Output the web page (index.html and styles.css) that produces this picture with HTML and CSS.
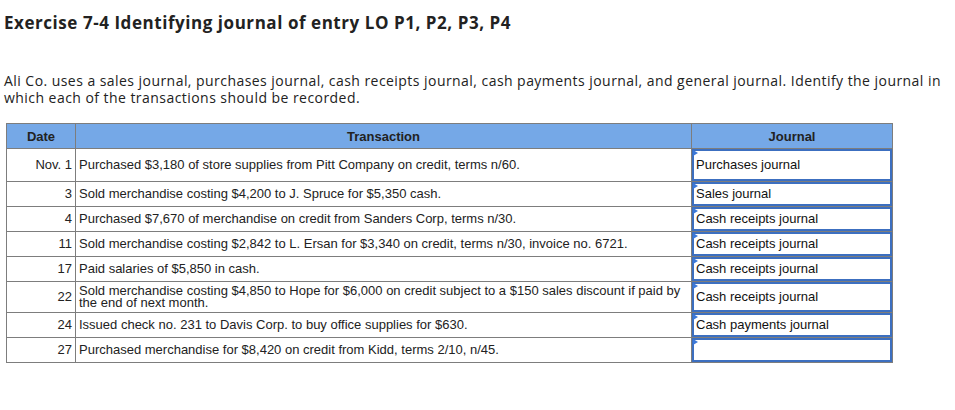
FILE: index.html
```html
<!DOCTYPE html>
<html>
<head>
<meta charset="utf-8">
<link rel="stylesheet" href="styles.css">
</head>
<body>
<h1 class="title">Exercise 7-4 Identifying journal of entry LO P1, P2, P3, P4</h1>
<p class="intro">Ali Co. uses a sales journal, purchases journal, cash receipts journal, cash payments journal, and general journal. Identify the journal in which each of the transactions should be recorded.</p>
<table class="grid">
  <colgroup>
    <col class="c-date">
    <col class="c-trans">
    <col class="c-jour">
  </colgroup>
  <thead>
    <tr><th>Date</th><th>Transaction</th><th>Journal</th></tr>
  </thead>
  <tbody>
    <tr class="r-tall">
      <td class="date">Nov. 1</td>
      <td class="trans">Purchased $3,180 of store supplies from Pitt Company on credit, terms n/60.</td>
      <td class="jour"><div class="sel">Purchases journal</div></td>
    </tr>
    <tr>
      <td class="date">3</td>
      <td class="trans">Sold merchandise costing $4,200 to J. Spruce for $5,350 cash.</td>
      <td class="jour"><div class="sel">Sales journal</div></td>
    </tr>
    <tr>
      <td class="date">4</td>
      <td class="trans">Purchased $7,670 of merchandise on credit from Sanders Corp, terms n/30.</td>
      <td class="jour"><div class="sel">Cash receipts journal</div></td>
    </tr>
    <tr>
      <td class="date">11</td>
      <td class="trans">Sold merchandise costing $2,842 to L. Ersan for $3,340 on credit, terms n/30, invoice no. 6721.</td>
      <td class="jour"><div class="sel">Cash receipts journal</div></td>
    </tr>
    <tr>
      <td class="date">17</td>
      <td class="trans">Paid salaries of $5,850 in cash.</td>
      <td class="jour"><div class="sel">Cash receipts journal</div></td>
    </tr>
    <tr class="r-two">
      <td class="date">22</td>
      <td class="trans">Sold merchandise costing $4,850 to Hope for $6,000 on credit subject to a $150 sales discount if paid by the end of next month.</td>
      <td class="jour"><div class="sel">Cash receipts journal</div></td>
    </tr>
    <tr>
      <td class="date">24</td>
      <td class="trans">Issued check no. 231 to Davis Corp. to buy office supplies for $630.</td>
      <td class="jour"><div class="sel">Cash payments journal</div></td>
    </tr>
    <tr>
      <td class="date">27</td>
      <td class="trans">Purchased merchandise for $8,420 on credit from Kidd, terms 2/10, n/45.</td>
      <td class="jour"><div class="sel"></div></td>
    </tr>
  </tbody>
</table>
</body>
</html>
```
FILE: styles.css
```css
html, body {
  margin: 0;
  background: #fff;
}
body {
  padding: 4px 0 0 4px;
  color: #222;
  font-family: "Open Sans", "Lato", sans-serif;
}
.title {
  margin: 9px 0 0 0;
  font-size: 17px;
  line-height: 20px;
  font-weight: 700;
  letter-spacing: 0.55px;
  color: #222;
}
.intro {
  margin: 39px 0 0 0;
  font-size: 14px;
  line-height: 17px;
  letter-spacing: 0.45px;
  color: #222;
  width: 945px;
}
.grid {
  margin: 17px 0 0 2px;
  border-collapse: collapse;
  table-layout: fixed;
  width: 886px;
  font-family: "Liberation Sans", Arial, sans-serif;
  font-size: 13px;
  color: #222;
}
.c-date { width: 69px; }
.c-trans { width: 616px; }
.c-jour { width: 201px; }
.grid th, .grid td {
  border: 1px solid #7d7d7d;
}
.grid th {
  background: #75a8e7;
  height: 24px;
  padding: 0;
  font-weight: 700;
  text-align: center;
  vertical-align: middle;
}
.grid td {
  height: 24px;
  padding: 0;
  line-height: 12px;
  vertical-align: middle;
}
.grid td.date {
  text-align: right;
  padding-right: 3px;
}
.grid td.trans {
  padding-left: 3px;
  padding-right: 4px;
}
.sel {
  position: relative;
  box-sizing: border-box;
  height: 24px;
  border: 2px solid #3c6fc0;
  padding: 0 2px;
  display: flex;
  align-items: center;
  color: #111;
  background: #fff;
}
.sel::before {
  content: "";
  position: absolute;
  left: -1px;
  top: -1px;
  border-top: 3px solid transparent;
  border-bottom: 3px solid transparent;
  border-left: 5px solid #3b78d8;
}
.r-tall td { height: 32px; }
.r-tall .sel { height: 32px; }
.r-two td { height: 30px; }
.r-two .sel { height: 30px; }
```
